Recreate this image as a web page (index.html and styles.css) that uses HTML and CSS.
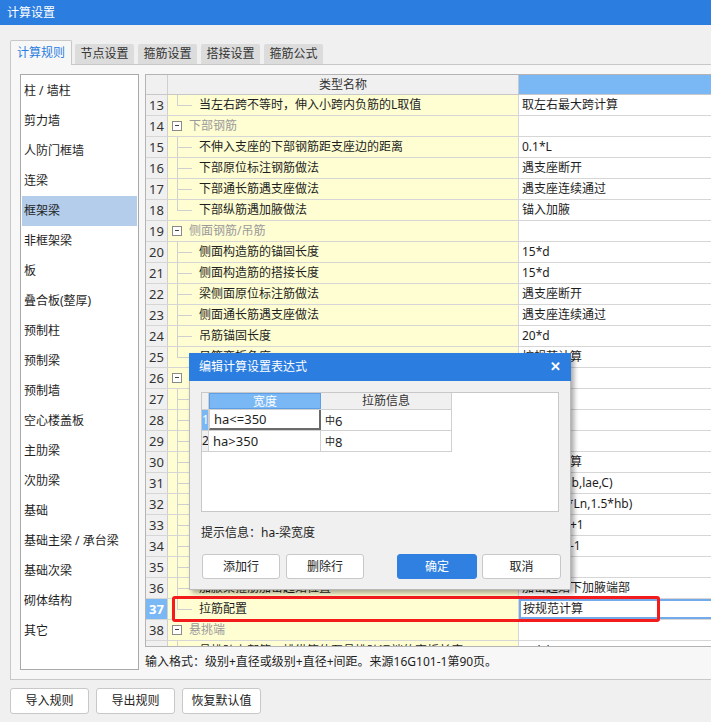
FILE: index.html
```html
<!DOCTYPE html>
<html lang="zh-CN">
<head>
<meta charset="utf-8">
<title>计算设置</title>
<link rel="stylesheet" href="styles.css">
</head>
<body>
<div class="titlebar">计算设置</div>

<div class="tabs">
  <div class="tab active">计算规则</div>
  <div class="tab">节点设置</div>
  <div class="tab">箍筋设置</div>
  <div class="tab">搭接设置</div>
  <div class="tab">箍筋公式</div>
</div>

<div class="panel">
  <ul class="list">
    <li>柱 / 墙柱</li>
    <li>剪力墙</li>
    <li>人防门框墙</li>
    <li>连梁</li>
    <li class="sel">框架梁</li>
    <li>非框架梁</li>
    <li>板</li>
    <li>叠合板(整厚)</li>
    <li>预制柱</li>
    <li>预制梁</li>
    <li>预制墙</li>
    <li>空心楼盖板</li>
    <li>主肋梁</li>
    <li>次肋梁</li>
    <li>基础</li>
    <li>基础主梁 / 承台梁</li>
    <li>基础次梁</li>
    <li>砌体结构</li>
    <li>其它</li>
  </ul>

  <div class="right">
    <div class="grid">
      <div class="row head"><div class="num"></div><div class="name">类型名称</div><div class="val"></div></div>
      <div class="row"><div class="num">13</div><div class="name child last">当左右跨不等时，伸入小跨内负筋的L取值</div><div class="val">取左右最大跨计算</div></div>
      <div class="row"><div class="num">14</div><div class="name group"><span class="toggle"></span>下部钢筋</div><div class="val"></div></div>
      <div class="row"><div class="num">15</div><div class="name child">不伸入支座的下部钢筋距支座边的距离</div><div class="val">0.1*L</div></div>
      <div class="row"><div class="num">16</div><div class="name child">下部原位标注钢筋做法</div><div class="val">遇支座断开</div></div>
      <div class="row"><div class="num">17</div><div class="name child">下部通长筋遇支座做法</div><div class="val">遇支座连续通过</div></div>
      <div class="row"><div class="num">18</div><div class="name child last">下部纵筋遇加腋做法</div><div class="val">锚入加腋</div></div>
      <div class="row"><div class="num">19</div><div class="name group"><span class="toggle"></span>侧面钢筋/吊筋</div><div class="val"></div></div>
      <div class="row"><div class="num">20</div><div class="name child">侧面构造筋的锚固长度</div><div class="val">15*d</div></div>
      <div class="row"><div class="num">21</div><div class="name child">侧面构造筋的搭接长度</div><div class="val">15*d</div></div>
      <div class="row"><div class="num">22</div><div class="name child">梁侧面原位标注筋做法</div><div class="val">遇支座断开</div></div>
      <div class="row"><div class="num">23</div><div class="name child">侧面通长筋遇支座做法</div><div class="val">遇支座连续通过</div></div>
      <div class="row"><div class="num">24</div><div class="name child">吊筋锚固长度</div><div class="val">20*d</div></div>
      <div class="row"><div class="num">25</div><div class="name child last">吊筋弯折角度</div><div class="val">按规范计算</div></div>
      <div class="row"><div class="num">26</div><div class="name group"><span class="toggle"></span>箍筋/拉筋</div><div class="val"></div></div>
      <div class="row"><div class="num">27</div><div class="name child">梁箍筋弯钩角度</div><div class="val">135°</div></div>
      <div class="row"><div class="num">28</div><div class="name child">箍筋弯钩平直段长度</div><div class="val">10*d</div></div>
      <div class="row"><div class="num">29</div><div class="name child">是否计算拉筋</div><div class="val">是</div></div>
      <div class="row"><div class="num">30</div><div class="name child">框架梁箍筋加密长度</div><div class="val">按规范计算</div></div>
      <div class="row"><div class="num">31</div><div class="name child">框架扁梁箍筋加密长度</div><div class="val">max(b+hb,lae,C)</div></div>
      <div class="row"><div class="num">32</div><div class="name child">框支梁箍筋加密长度</div><div class="val">max(0.2*Ln,1.5*hb)</div></div>
      <div class="row"><div class="num">33</div><div class="name child">框架梁箍筋、拉筋加密区根数计算方式</div><div class="val">向上取整+1</div></div>
      <div class="row"><div class="num">34</div><div class="name child">框架梁箍筋、拉筋非加密区根数计算方式</div><div class="val">向上取整-1</div></div>
      <div class="row"><div class="num">35</div><div class="name child">箍筋、拉筋开始位置</div><div class="val">50</div></div>
      <div class="row"><div class="num">36</div><div class="name child">加腋梁箍筋加密起始位置</div><div class="val">加密起始下加腋端部</div></div>
      <div class="row current"><div class="num">37</div><div class="name child last">拉筋配置</div><div class="val">按规范计算</div></div>
      <div class="row"><div class="num">38</div><div class="name group"><span class="toggle"></span>悬挑端</div><div class="val"></div></div>
      <div class="row"><div class="num">39</div><div class="name child">悬挑跨上部第一排纵筋伸至悬挑跨远端的弯折长度</div><div class="val">12*d</div></div>
      <div class="redbox"></div>
    </div>
    <div class="note">输入格式：级别+直径或级别+直径+间距。来源16G101-1第90页。</div>
  </div>
</div>

<div class="actions">
  <button class="btn">导入规则</button>
  <button class="btn">导出规则</button>
  <button class="btn">恢复默认值</button>
</div>

<div class="dialog">
  <div class="dlg-title"><span>编辑计算设置表达式</span><span class="close">✕</span></div>
  <div class="dlg-body">
    <div class="subgrid">
      <div class="srow shead"><div class="snum"></div><div class="sc1 hl">宽度</div><div class="sc2">拉筋信息</div></div>
      <div class="srow"><div class="snum on">1</div><div class="sc1 edit">ha&lt;=350</div><div class="sc2"><span class="grade">中</span>6</div></div>
      <div class="srow"><div class="snum">2</div><div class="sc1">ha&gt;350</div><div class="sc2"><span class="grade">中</span>8</div></div>
    </div>
    <div class="dlg-hint">提示信息：ha-梁宽度</div>
    <div class="dlg-btns">
      <button class="btn dbtn">添加行</button>
      <button class="btn dbtn">删除行</button>
      <span class="spacer"></span>
      <button class="btn dbtn primary">确定</button>
      <button class="btn dbtn">取消</button>
    </div>
  </div>
</div>
</body>
</html>
```

FILE: styles.css
```css
* { box-sizing: border-box; }

html, body {
  margin: 0;
  padding: 0;
}

body {
  width: 711px;
  height: 722px;
  overflow: hidden;
  position: relative;
  background: #f0f0f0;
  color: #1e1e1e;
  font-family: "Noto Sans", "Noto Sans CJK SC", sans-serif;
  font-size: 12px;
  line-height: 16px;
}

.titlebar {
  height: 25px;
  line-height: 25px;
  padding-left: 7px;
  background: #2b7ddf;
  color: #fff;
  font-size: 12px;
}

/* tabs */
.tabs {
  display: flex;
  align-items: flex-end;
  margin-top: 15px;
  padding-left: 10px;
  height: 24px;
  position: relative;
  z-index: 2;
}

.tab {
  width: 59px;
  height: 20px;
  line-height: 20px;
  margin-right: 4px;
  text-align: center;
  background: #dcdcdc;
  color: #333;
  border-radius: 2px 2px 0 0;
}

.tab.active {
  width: 62px;
  height: 25px;
  line-height: 24px;
  margin-right: 3px;
  margin-bottom: -1px;
  background: #f7f7f7;
  color: #2b7ddf;
  border: 1px solid #c8c8c8;
  border-bottom: none;
}

/* main panel */
.panel {
  margin-left: 10px;
  width: 760px;
  height: 616px;
  border: 1px solid #c8c8c8;
  background: #f7f7f7;
  padding: 9px 9px;
  display: flex;
  gap: 6px;
}

.list {
  list-style: none;
  margin: 0;
  padding: 1px;
  width: 119px;
  height: 596px;
  flex: none;
  background: #fff;
  border: 1px solid #a9a9a9;
}

.list li {
  height: 30px;
  line-height: 30px;
  padding-left: 2px;
  white-space: nowrap;
}

.list li.sel {
  background: #b3cdeb;
}

.right {
  flex: 1;
  display: flex;
  flex-direction: column;
}

/* grid */
.grid {
  position: relative;
  height: 575px;
  border: 1px solid #b4b4b4;
  background: #fff;
  overflow: hidden;
}

.row {
  display: flex;
  height: 21px;
  border-bottom: 1px solid #d6d6d6;
}

.row.head {
  height: 20px;
  border-bottom: 1px solid #c8c8c8;
}

.num {
  width: 22px;
  flex: none;
  background: #f0f0f0;
  border-right: 1px solid #cfcfcf;
  text-align: center;
  font-size: 13px;
  line-height: 20px;
  color: #333;
}

.name {
  width: 351px;
  flex: none;
  position: relative;
  background: #fffed3;
  border-right: 1px solid #d6d6d6;
  line-height: 20px;
  white-space: nowrap;
  overflow: hidden;
}

.val {
  flex: 1;
  padding-left: 3px;
  line-height: 20px;
  white-space: nowrap;
}

.row.head .num,
.row.head .name {
  background: #f0f0f0;
  text-align: center;
  line-height: 19px;
  color: #333;
}

.row.head .name {
  border-right: 1px solid #c8c8c8;
}

.row.head .val {
  background: #7ab8f5;
}

.name.child {
  padding-left: 31px;
}

.name.child::before {
  content: "";
  position: absolute;
  left: 9px;
  top: 0;
  bottom: 0;
  width: 1px;
  background: #cfcfcf;
}

.name.child.last::before {
  bottom: auto;
  height: 10px;
}

.name.child::after {
  content: "";
  position: absolute;
  left: 9px;
  top: 10px;
  width: 15px;
  height: 1px;
  background: #cfcfcf;
}

.name.group {
  padding-left: 21px;
  color: #9a9a9a;
}

.toggle {
  position: absolute;
  left: 4px;
  top: 5px;
  width: 10px;
  height: 10px;
  border: 1px solid #8a8a8a;
  background: #fff;
}

.toggle::after {
  content: "";
  position: absolute;
  left: 2px;
  top: 3px;
  width: 4px;
  height: 1px;
  background: #444;
}

.row.current .num {
  background: #7ab8f5;
  color: #fff;
  font-weight: bold;
}

.row.current .val {
  box-shadow: inset 0 0 0 2px #72aaea;
  padding-left: 4px;
}

.redbox {
  position: absolute;
  left: 26px;
  top: 521px;
  width: 488px;
  height: 26px;
  border: 3px solid #f31b1b;
  border-radius: 3px;
}

.note {
  margin-top: 7px;
  line-height: 16px;
  white-space: nowrap;
}

/* buttons */
.btn {
  font: inherit;
  color: #222;
  background: #fff;
  border: 1px solid #c8c8c8;
  border-radius: 3px;
  padding: 0;
  cursor: default;
}

.actions {
  display: flex;
  gap: 7px;
  margin-top: 8px;
  padding-left: 10px;
}

.actions .btn {
  width: 79px;
  height: 26px;
}

/* dialog */
.dialog {
  position: absolute;
  left: 189px;
  top: 353px;
  width: 382px;
  height: 237px;
  background: #f0f0f0;
  border: 1px solid #b9b9b9;
  box-shadow: 3px 3px 5px rgba(0, 0, 0, 0.35);
}

.dlg-title {
  height: 28px;
  line-height: 27px;
  margin: -1px -1px 0 -1px;
  padding: 0 10px 0 10px;
  background: #2b7ddf;
  color: #fff;
  display: flex;
  justify-content: space-between;
}

.close {
  font-size: 13px;
  font-weight: bold;
}

.dlg-body {
  padding: 11px 11px 0 11px;
}

.subgrid {
  width: 358px;
  height: 120px;
  background: #fff;
  border: 1px solid #c8c8c8;
}

.srow {
  display: flex;
  height: 21px;
  border-bottom: 1px solid #d0d0d0;
  width: 250px;
  line-height: 20px;
}

.srow.shead {
  height: 17px;
  line-height: 16px;
  background: #f0f0f0;
}

.snum {
  width: 7px;
  flex: none;
  border-right: 1px solid #d0d0d0;
  background: #f0f0f0;
  font-size: 12px;
  overflow: hidden;
  text-align: center;
}

.snum.on {
  background: #7ab8f5;
  color: #fff;
}

.sc1 {
  width: 112px;
  flex: none;
  border-right: 1px solid #d0d0d0;
  padding-left: 4px;
  font-size: 13px;
}

.sc2 {
  width: 131px;
  flex: none;
  border-right: 1px solid #d0d0d0;
  padding-left: 4px;
  font-size: 13px;
}

.shead .sc1,
.shead .sc2 {
  text-align: center;
  font-size: 12px;
  padding-left: 0;
  color: #333;
}

.shead .sc1.hl {
  background: #7ab8f5;
  color: #fff;
  border: 1px solid #5d9fe6;
}

.sc1.edit {
  border: 2px solid #6a6a6a;
  border-left: 1px solid #d0d0d0;
  border-top: none;
  line-height: 19px;
}

.grade {
  font-size: 10px;
  vertical-align: 2px;
}

.dlg-hint {
  margin-top: 13px;
  line-height: 16px;
}

.dlg-btns {
  display: flex;
  margin-top: 13px;
  padding-left: 1px;
  width: 360px;
}

.dbtn {
  width: 78px;
  height: 25px;
  margin-right: 6px;
}

.spacer {
  flex: 1;
}

.dbtn.primary {
  width: 80px;
  margin-right: 5px;
  background: #2f80e0;
  border-color: #2f80e0;
  color: #fff;
}

.dbtn:last-child {
  width: 79px;
  margin-right: 0;
}
```
